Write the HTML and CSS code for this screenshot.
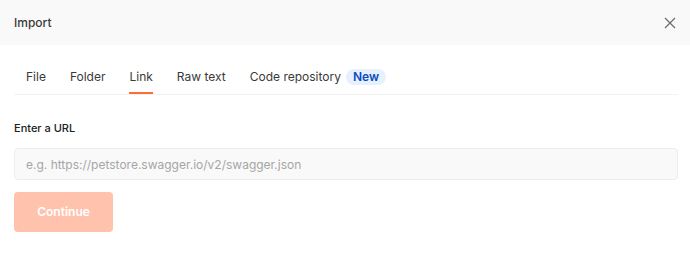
FILE: index.html
```html
<!DOCTYPE html>
<html>
<head>
<title>Import</title>
<link rel="stylesheet" href="styles.css">
</head>
<body>
<div class="modal">
    <header class="modal_head">
        <span class="modal_title">Import</span>
        <a href="javascript:void(0);" class="ic_close">
            <svg width="12" height="12" viewBox="0 0 12 12"><path d="M1 1L11 11M11 1L1 11" stroke="#6b6b6b" stroke-width="1.2" fill="none"/></svg>
        </a>
    </header>
    <section class="modal_body">
        <ul class="tabs">
            <li>File</li>
            <li>Folder</li>
            <li class="on">Link</li>
            <li>Raw text</li>
            <li>Code repository <span class="badge">New</span></li>
        </ul>
        <form action="#" method="post" class="link_form">
            <label for="url">Enter a URL</label>
            <input type="text" id="url" name="url" placeholder="e.g. https://petstore.swagger.io/v2/swagger.json" />
            <a href="javascript:void(0);" class="btn_continue">Continue</a>
        </form>
    </section>
</div>
</body>
</html>
```

FILE: styles.css
```css
* {
	margin:0;
	padding:0;
	box-sizing:border-box;
}
body {
	background:#ffffff;
	font-family:Inter, "Noto Sans", sans-serif;
	font-size:12px;
	color:#212121;
}
.modal_head {
	height:45px;
	background:#f9f9f9;
	display:flex;
	align-items:center;
	justify-content:space-between;
	padding:0 14px;
}
.modal_title {
	font-weight:500;
	font-size:12px;
	color:#3a3a3a;
}
.ic_close {
	display:flex;
	width:12px;
	height:12px;
}
.modal_body {
	padding:0 12px 0 14px;
}
.tabs {
	list-style:none;
	display:flex;
	gap:24px;
	padding:24px 12px 0;
	border-bottom:1px solid #f2f2f2;
}
.tabs li {
	line-height:16px;
	padding-bottom:7px;
	color:#3a3a3a;
	display:flex;
	align-items:flex-start;
	gap:5px;
	border-bottom:2px solid transparent;
}
.tabs li.on {
	border-bottom-color:#ff6c37;
}
.badge {
	display:inline-block;
	height:16px;
	line-height:16px;
	padding:0 7px;
	border-radius:8px;
	background:#e7f0ff;
	color:#0b4bbd;
	font-weight:600;
	font-size:12px;
}
.link_form {
	display:flex;
	flex-direction:column;
	align-items:flex-start;
	padding-top:25px;
}
.link_form label {
	font-weight:500;
	font-size:11px;
	color:#212121;
	line-height:16px;
}
.link_form input {
	margin-top:12px;
	width:100%;
	height:32px;
	border:1px solid #ededed;
	border-radius:4px;
	background:#f9f9f9;
	padding:0 11px;
	font-family:Inter, "Noto Sans", sans-serif;
	font-size:12px;
	color:#212121;
	outline:none;
}
.link_form input::placeholder {
	color:#a6a6a6;
}
.btn_continue {
	margin-top:12px;
	width:99px;
	height:40px;
	line-height:40px;
	text-align:center;
	border-radius:4px;
	background:#ffc3ad;
	color:#ffffff;
	font-weight:600;
	font-size:12px;
	text-decoration:none;
}
```
